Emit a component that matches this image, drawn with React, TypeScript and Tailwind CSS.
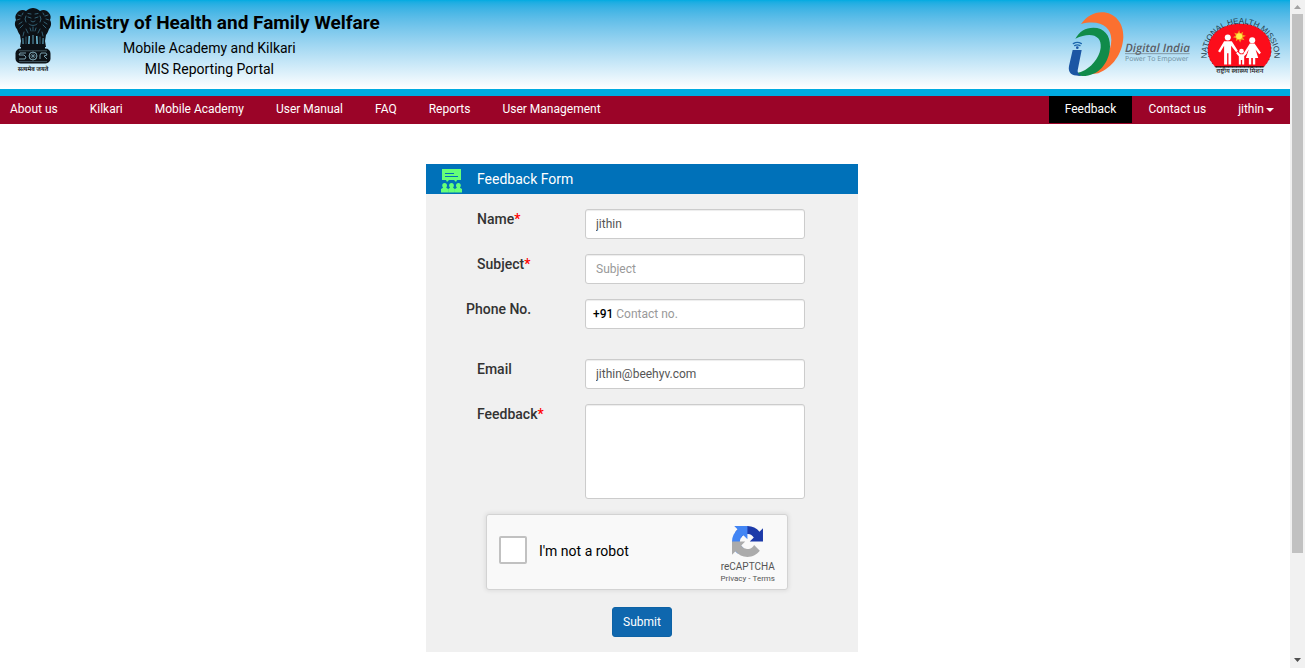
import React from "react";

function Emblem() {
  return (
    <svg viewBox="0 0 38 66" className="h-[66px] w-[38px] shrink-0" role="img" aria-label="State emblem of India">
      <path
        d="M12 3c2-2 5-3 7-3s5 1 7 3c3-2 7-1 9 2 2 2 2 5 1 7 2 3 1 7-1 9-1 3-2 5-3 6l-1 6 1 6H6l1-6-1-6c-1-1-2-3-3-6-2-2-3-6-1-9-1-2-1-5 1-7 2-3 6-4 9-2Z"
        fill="#0c1116"
      />
      <g fill="none" stroke="#4b93b0" strokeWidth=".6" strokeLinecap="round">
        <path d="M14 5.500l3 .5M21 6l3-.5M14 9l3 1M21 10l3-1M17 13l2 1 2-1M15 16c2 2 6 2 8 0M12 8l-1 3 1 3M26 8l1 3-1 3" />
        <path d="M4 7l3 1M3 12l3-1M5 16l3-2M6 20l3-3M34 7l-3 1M35 12l-3-1M33 16l-3-2M32 20l-3-3M9 5l-1 2M29 5l1 2" />
        <path d="M16 20l1 3M19 19v4M22 20l-1 3M12 21l2 4M26 21l-2 4" />
        <path d="M10 24l-1 4M28 24l1 4M12 29v7M26 29v7" />
      </g>
      <g fill="#72c2de">
        <path d="M14.500 28h1.500l-.5 10h-1.500ZM22 28h1.500l.5 10h-1.500ZM18.600 27h.8v10h-.8ZM8.500 30h.8l.3 7h-1ZM28.700 30h.8L29.400 37h-1Z" />
      </g>
      <rect x="1.500" y="40.500" width="35" height="15" rx="5" fill="#0c1116" />
      <path d="M7 36h24v6H7Z" fill="#0c1116" />
      <g fill="none" stroke="#8fbccd" strokeWidth=".8">
        <circle cx="19" cy="48" r="4" />
        <path d="M19 44v8M15 48h8M16.200 45.200l5.600 5.600M21.800 45.200l-5.600 5.600" strokeWidth=".5" />
        <path d="M12 45H6l-1 2h5l2 2-1 2H5M26 51v-4l1-2h5l1 2-3 1 3 3" />
        <path d="M5 42.800h28M5 53.600h28" strokeWidth=".4" />
      </g>
      <text x="19" y="63" textAnchor="middle" fontSize="6" fontWeight="600" textRendering="geometricPrecision" fontFamily="Noto Sans, sans-serif">
        सत्यमेव जयते
      </text>
    </svg>
  );
}

function DigitalIndiaLogo() {
  return (
    <svg viewBox="0 0 405 240" className="h-20 w-[135px] shrink-0" role="img" aria-label="Digital India, Power To Empower">
      <path d="M60 57C78 34 98 22 122 22c40 0 66 32 65 75-2 50-33 91-75 108l-18 2c34-25 57-68 57-103 0-39-34-61-91-47Z" fill="#fb7030" />
      <path d="M43 101c12-22 30-33 54-33 32 0 51 22 50 57-2 50-35 88-82 88-13 0-23-5-27-9 34 2 76-35 81-76 4-36-29-49-76-27Z" fill="#108b4a" />
      <path d="M35 135h27l-12 61c-1 7 3 12 11 16-27 2-41-7-37-29Z" fill="#1c56a4" />
      <g fill="none" stroke="#1c66ac" strokeWidth="4" strokeLinecap="round">
        <path d="M37 116q12-8 24 0M41 122q8-5 16 0" />
      </g>
      <circle cx="49" cy="128" r="4" fill="#1c56a4" />
      <text x="192" y="140" fontSize="35" fontWeight="600" fontStyle="italic" fill="#5b6067" textRendering="geometricPrecision" fontFamily="Open Sans, sans-serif">
        Digital India
      </text>
      <path d="M192 146h194" stroke="#6d757c" strokeWidth="2" />
      <text x="192" y="168" fontSize="21" fill="#6f8f9e" textRendering="geometricPrecision" fontFamily="Open Sans, sans-serif">
        Power To Empower
      </text>
    </svg>
  );
}

function HealthMissionLogo() {
  return (
    <svg viewBox="20 30 260 200" className="h-[67px] w-[87px] shrink-0" role="img" aria-label="National Health Mission">
      <path id="nhm-arc" d="M60 204A101 96 0 1 1 246 204" fill="none" />
      <text fontSize="24" fill="#24404e" textRendering="geometricPrecision" fontFamily="Liberation Sans, sans-serif">
        <textPath href="#nhm-arc" startOffset="50%" textAnchor="middle">
          NATIONAL HEALTH MISSION
        </textPath>
      </text>
      <path d="M78 200C63 185 55 168 55 150c0-46 42-79 97-79s93 33 93 79c0 18-8 35-23 50Z" fill="#fc0d1b" stroke="#3a0a12" strokeWidth="2" strokeDasharray="3 9" />
      <path d="M78 200h144" stroke="#111" strokeWidth="4" />
      <path d="M149 90l3 10 9-5-2 9 10 3-9 5 5 8-9-2-4 9-5-9-8 5 1-9-10-3 9-5-5-8 10 2Z" fill="#f9961e" />
      <circle cx="149" cy="108" r="9" fill="#fff04a" />
      <g fill="#fff">
        <circle cx="115" cy="112" r="9" />
        <path d="M104 123h23l18 29-5 4-15-19v56h-8v-34h-4v34h-9v-56l-12 20-6-4Z" />
        <circle cx="188" cy="120" r="9" />
        <path d="M181 130h14l19 28-5 4-11-14 8 25h-9v20h-7v-20h-5v20h-7v-20h-9l9-25-11 16-5-4Z" />
        <circle cx="156" cy="153" r="7" />
        <path d="M144 155l8 7h9l8-7 3 4-8 9v25h-6v-14h-4v14h-6v-25l-8-9Z" />
      </g>
      <text x="151" y="218" textAnchor="middle" fontSize="19" fontWeight="500" fill="#222" textRendering="geometricPrecision" fontFamily="Noto Sans, sans-serif">
        राष्ट्रीय स्वास्थ्य मिशन
      </text>
    </svg>
  );
}

function AudienceIcon() {
  return (
    <svg viewBox="0 0 21 24" className="h-6 w-[21px]" aria-hidden="true">
      <path d="M1 0h19v11h-4l-1 2-2-2H8l-2 2-1-2H1Z" fill="#66ff78" />
      <path d="M4 4.500h9M4 7.500h13" stroke="#0071b9" strokeWidth="1" />
      <g fill="#66ff78">
        <path d="M1.200 16.500a2.400 2.600 0 1 1 4.800 0c0 1-.4 1.600-.8 2.200l2 1.300V23.500H0v-3.500l2.100-1.300c-.5-.6-.9-1.200-.9-2.200Z" />
        <path d="M8.100 16.500a2.400 2.600 0 1 1 4.800 0c0 1-.4 1.600-.9 2.200l1.900 1.300V23.500H7.200v-3.500l1.900-1.300c-.5-.6-1-1.200-1-2.200Z" />
        <path d="M15 16.500a2.400 2.600 0 1 1 4.800 0c0 1-.4 1.600-.9 2.200l2.100 1.300V23.500h-7v-3.500l1.900-1.300c-.5-.6-.9-1.200-.9-2.200Z" />
      </g>
    </svg>
  );
}

function RecaptchaLogo() {
  return (
    <svg viewBox="0 0 64 64" className="size-[31px]" aria-hidden="true">
      <path fill="#1c3aa9" d="M64 31.955l-.033-1.370V4.687l-7.160 7.160C50.948 4.674 42.033.093 32.050.093c-10.400 0-19.622 4.960-25.458 12.640l11.736 11.860a15.550 15.550 0 0 1 4.754-5.334c2.050-1.600 4.952-2.906 8.968-2.906.485 0 .860.057 1.135.163 4.976.393 9.288 3.140 11.828 7.124l-8.307 8.307L64 31.953" />
      <path fill="#4285f4" d="M31.862.094l-1.370.033H4.594l7.160 7.160C4.580 13.147 0 22.060 0 32.046c0 10.400 4.960 19.622 12.640 25.458L24.500 45.768a15.550 15.550 0 0 1-5.334-4.754c-1.600-2.050-2.906-4.952-2.906-8.968 0-.485.057-.860.163-1.135.393-4.976 3.140-9.288 7.124-11.828l8.307 8.307L31.860.095" />
      <path fill="#ababab" d="M.001 32.045l.033 1.370v25.898l7.160-7.160c5.860 7.173 14.774 11.754 24.760 11.754 10.400 0 19.622-4.960 25.458-12.640l-11.736-11.860a15.550 15.550 0 0 1-4.754 5.334c-2.050 1.600-4.952 2.906-8.968 2.906-.485 0-.860-.057-1.135-.163-4.976-.393-9.288-3.140-11.828-7.124l8.307-8.307c-10.522.040-22.400.066-27.295-.005" />
    </svg>
  );
}

const links = ["About us", "Kilkari", "Mobile Academy", "User Manual", "FAQ", "Reports", "User Management"];

const field =
  "w-full rounded-[3px] border border-[#ccc] bg-white px-[10px] text-[12px] text-[#555] shadow-[inset_0_1px_1px_rgba(0,0,0,0.075)] outline-none placeholder:text-[#999]";
const row = "grid grid-cols-[108px_220px] items-start pl-[51px]";
const labelText = "text-[14px] leading-5 font-medium text-[#333]";

function Required() {
  return <span className="text-[#ff0000]">*</span>;
}

function FeedbackForm() {
  return (
    <form className="w-[432px] bg-[#f0f0f0] pb-[15px]" onSubmit={(e) => e.preventDefault()}>
      <div className="flex h-[30px] items-center bg-[#0071b9] pl-[15px]">
        <div className="w-9 pt-1">
          <AudienceIcon />
        </div>
        <h1 className="text-[14px] text-white">Feedback Form</h1>
      </div>

      <div className="flex flex-col gap-[15px] pt-[15px]">
        <div className={row}>
          <label htmlFor="name" className={labelText}>
            Name
            <Required />
          </label>
          <input id="name" className={`${field} h-[30px]`} defaultValue="jithin" />
        </div>
        <div className={row}>
          <label htmlFor="subject" className={labelText}>
            Subject
            <Required />
          </label>
          <input id="subject" className={`${field} h-[30px]`} placeholder="Subject" />
        </div>
        <div className="mb-[15px] grid grid-cols-[119px_220px] items-start pl-10">
          <label htmlFor="phone" className={labelText}>
            Phone No.
          </label>
          <div className="flex h-[30px] items-center gap-[3px] rounded-[3px] border border-[#ccc] bg-white pl-[7px] text-[12px] shadow-[inset_0_1px_1px_rgba(0,0,0,0.075)]">
            <span className="font-medium text-black">+91</span>
            <input id="phone" type="tel" className="min-w-0 flex-1 bg-transparent text-[#555] outline-none placeholder:text-[#999]" placeholder="Contact no." />
          </div>
        </div>
        <div className={row}>
          <label htmlFor="email" className={labelText}>
            Email
          </label>
          <input id="email" type="email" className={`${field} h-[30px]`} defaultValue="jithin@beehyv.com" />
        </div>
        <div className={row}>
          <label htmlFor="feedback" className={labelText}>
            Feedback
            <Required />
          </label>
          <textarea id="feedback" className={`${field} block h-[95px] resize-none py-[5px]`} />
        </div>
      </div>

      <div className="mt-[15px] ml-[60px] flex h-[76px] w-[302px] items-center rounded-[3px] border border-[#d3d3d3] bg-[#f9f9f9] pl-3 shadow-[0_0_4px_1px_rgba(0,0,0,0.08)]">
        <input id="robot" type="checkbox" className="mb-1 size-7 appearance-none rounded-[2px] border-2 border-[#c1c1c1] bg-white" />
        <label htmlFor="robot" className="flex-1 pb-[2px] pl-3 text-[14px] leading-5 text-black">
          I'm not a robot
        </label>
        <div className="mr-3 flex flex-col items-center pt-[6px] text-[#555]">
          <RecaptchaLogo />
          <span className="pt-1 text-[10px] leading-3">reCAPTCHA</span>
          <span className="flex gap-[2px] text-[8px] leading-3">
            <a href="#privacy">Privacy</a>
            <span>-</span>
            <a href="#terms">Terms</a>
          </span>
        </div>
      </div>

      <div className="mt-[17px] flex justify-center">
        <button type="submit" className="h-[30px] w-[60px] rounded-[3px] border border-[#0d62a5] bg-[#0f67ae] text-[12px] text-white">
          Submit
        </button>
      </div>
    </form>
  );
}

function ScrollTrack() {
  return (
    <div className="sticky top-0 flex h-screen w-[15px] shrink-0 flex-col items-center bg-[#f1f1f1]" aria-hidden="true">
      <svg viewBox="0 0 15 14" className="h-[14px] w-[15px] shrink-0">
        <path d="M4 9h7L7.500 5Z" fill="#a3a3a3" />
      </svg>
      <div className="min-h-0 w-[11px] flex-[539_1_0%] bg-[#c1c1c1]" />
      <div className="min-h-0 flex-[101_1_0%]" />
      <svg viewBox="0 0 15 14" className="h-[14px] w-[15px] shrink-0">
        <path d="M4 4h7L7.500 8Z" fill="#505050" />
      </svg>
    </div>
  );
}

export default function App() {
  return (
    <div className="flex min-h-screen bg-white font-[Roboto,sans-serif]">
      <div className="min-w-0 flex-1">
        <header className="flex h-24 items-start justify-between border-b-[7px] border-[#00abe1] bg-linear-to-b from-[#00abe1] to-white">
          <div className="flex pl-[14px]">
            <div className="pt-2">
              <Emblem />
            </div>
            <div className="pt-[11px] pl-[7px] text-center text-black">
              <p className="text-[19px] leading-6 font-bold">Ministry of Health and Family Welfare</p>
              <p className="pt-[3px] pr-5 text-[14px] leading-[21px]">Mobile Academy and Kilkari</p>
              <p className="pr-5 text-[14px] leading-[21px]">MIS Reporting Portal</p>
            </div>
          </div>
          <div className="flex pr-[7px]">
            <div className="pt-[5px]">
              <DigitalIndiaLogo />
            </div>
            <div className="pt-[10px]">
              <HealthMissionLogo />
            </div>
          </div>
        </header>

        <nav className="flex h-7 justify-between bg-[#9b0428] text-[12px] leading-[27px] text-white">
          <ul className="flex gap-8 pl-[10px]">
            {links.map((l) => (
              <li key={l}>
                <a href="#page">{l}</a>
              </li>
            ))}
          </ul>
          <ul className="flex">
            <li className="h-[27px] bg-black px-4">
              <a href="#feedback">Feedback</a>
            </li>
            <li className="px-4">
              <a href="#contact">Contact us</a>
            </li>
            <li className="px-4">
              <button type="button" className="flex items-center gap-[2px]">
                jithin
                <svg viewBox="0 0 8 4" className="h-1 w-2" aria-hidden="true">
                  <path d="M0 0h8L4 4Z" fill="currentColor" />
                </svg>
              </button>
            </li>
          </ul>
        </nav>

        <main className="flex justify-center pt-10 pr-[6px] pb-4">
          <FeedbackForm />
        </main>
      </div>
      <ScrollTrack />
    </div>
  );
}
